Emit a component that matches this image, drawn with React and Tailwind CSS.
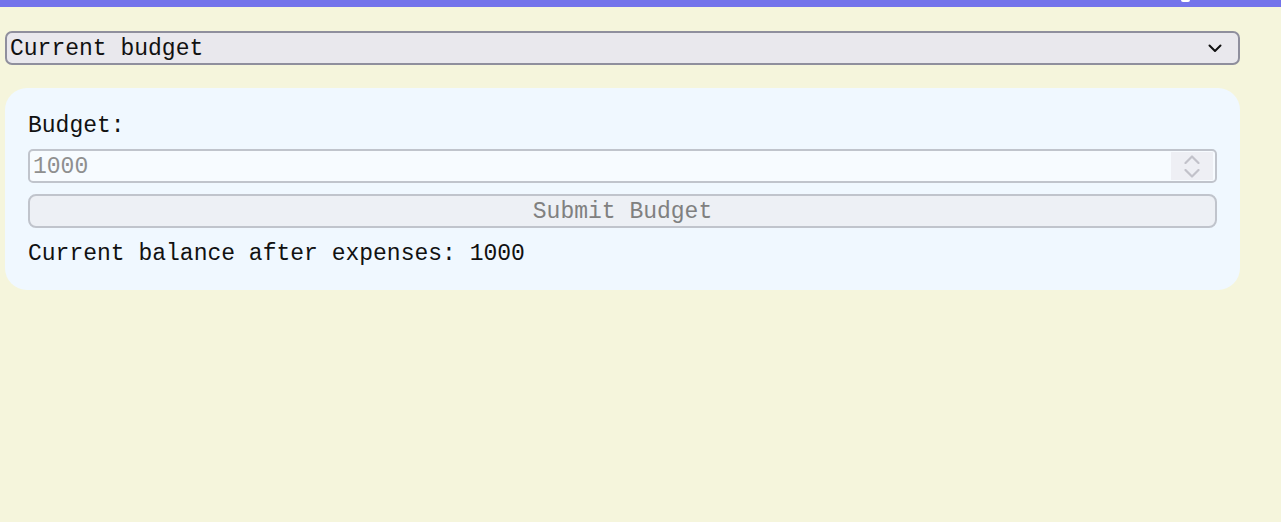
import React from 'react';

const mono = { fontFamily: '"Liberation Mono", "Courier New", monospace' };

function Chevron({ up, className }) {
  return (
    <svg width="16" height="9" viewBox="0 0 16 9" className={className} fill="none">
      <path
        d={up ? 'M1.5 8 L8 1.5 L14.5 8' : 'M1.5 1 L8 7.5 L14.5 1'}
        stroke="currentColor"
        strokeWidth="2.2"
        strokeLinecap="round"
        strokeLinejoin="round"
      />
    </svg>
  );
}

export default function App() {
  return (
    <div className="min-h-[522px] bg-[#F5F5DC] text-[23px] leading-[26px] text-[#111]" style={mono}>
      {/* header, scrolled mostly out of view */}
      <div className="h-[7px] bg-[#7373EB] flex justify-end">
        <span className="mr-[91px] w-[9px] h-[2px] bg-white rounded-b-sm"></span>
      </div>

      <div className="px-[5px] pr-[41px] pt-[24px]">
        {/* budget view selector */}
        <div className="h-[34px] flex items-center justify-between border-2 border-[#8F8F9D] rounded-[7px] bg-[#E9E8ED] pl-[3px] pr-[16px]">
          <span className="pt-[2px]">Current budget</span>
          <svg width="14" height="9" viewBox="0 0 14 9" fill="none" className="text-[#111]">
            <path d="M1.5 1.5 L7 7 L12.5 1.5" stroke="currentColor" strokeWidth="2" strokeLinecap="round" strokeLinejoin="round" />
          </svg>
        </div>

        {/* budget card */}
        <div className="mt-[23px] bg-[#F0F8FF] rounded-[22px] px-[23px] pt-[25px] pb-[23px]">
          <label className="block">Budget:</label>

          <div className="mt-[10px] h-[34px] flex items-center border-2 border-[#C0C4CC] rounded-[5px] bg-[#F7FBFF] pl-[3px] pr-[2px]">
            <input
              type="text"
              placeholder="1000"
              className="flex-1 bg-transparent outline-none placeholder-[#8F8F8F] text-[23px] pt-[2px]"
              style={mono}
            />
            <div className="w-[42px] h-[28px] bg-[#EEEFF4] flex flex-col items-center justify-center gap-[5px] text-[#C2C2CA]">
              <Chevron up />
              <Chevron />
            </div>
          </div>

          <button
            disabled
            className="mt-[11px] w-full h-[34px] border-2 border-[#C0C4CC] rounded-[8px] bg-[#EDF0F5] text-[#808080] text-[23px] leading-[26px] flex items-center justify-center pt-[2px]"
            style={mono}
          >
            Submit Budget
          </button>

          <p className="mt-[13px]">Current balance after expenses: 1000</p>
        </div>
      </div>
    </div>
  );
}
